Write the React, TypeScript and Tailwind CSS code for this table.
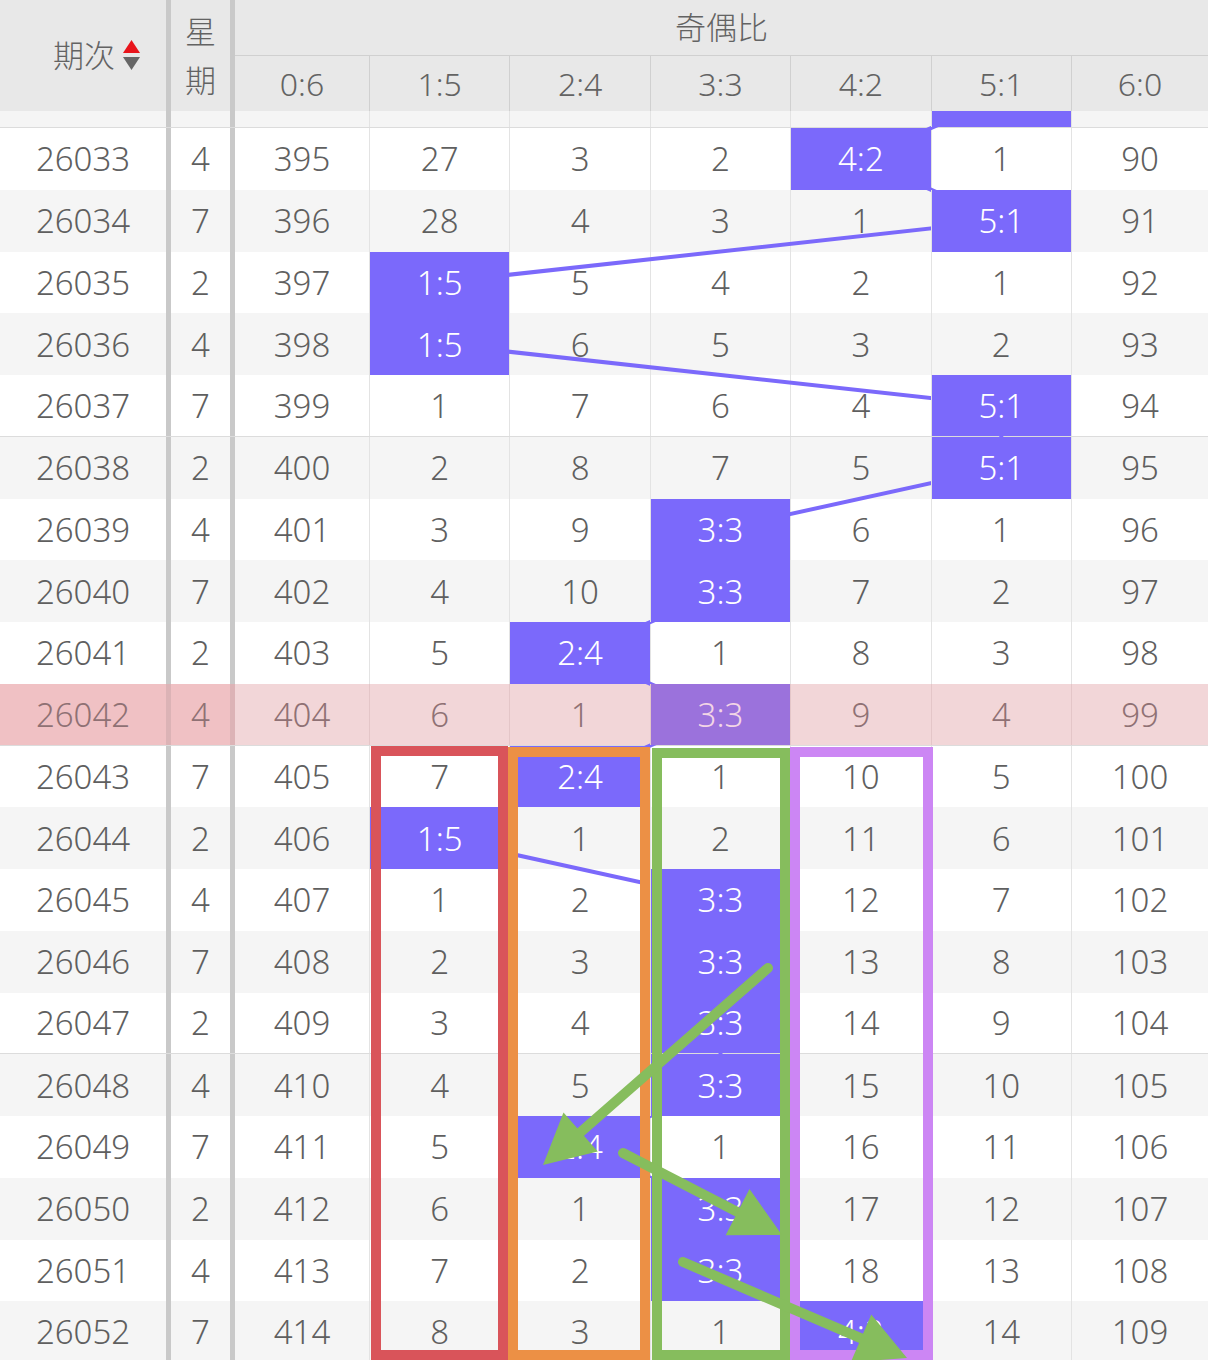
import clsx from 'clsx';

const FONT = '"Noto Sans", "Noto Sans CJK SC", sans-serif';
const LABELS = ['0:6', '1:5', '2:4', '3:3', '4:2', '5:1', '6:0'];
const COL_X = [235, 369, 509.4, 649.8, 790.2, 930.6, 1071, 1208];
const ROW_H = 61.75;
const STRIP_H = 17;
const PINK = 9;
const COLS = 'grid grid-cols-[171px_64px_134px_repeat(5,140.4px)_1fr]';

// [期次, 星期, values for 0:6..6:0, hit column]
const rows: [string, number, number[], number][] = [
    ['26033', 4, [395, 27, 3, 2, 0, 1, 90], 4],
    ['26034', 7, [396, 28, 4, 3, 1, 0, 91], 5],
    ['26035', 2, [397, 0, 5, 4, 2, 1, 92], 1],
    ['26036', 4, [398, 0, 6, 5, 3, 2, 93], 1],
    ['26037', 7, [399, 1, 7, 6, 4, 0, 94], 5],
    ['26038', 2, [400, 2, 8, 7, 5, 0, 95], 5],
    ['26039', 4, [401, 3, 9, 0, 6, 1, 96], 3],
    ['26040', 7, [402, 4, 10, 0, 7, 2, 97], 3],
    ['26041', 2, [403, 5, 0, 1, 8, 3, 98], 2],
    ['26042', 4, [404, 6, 1, 0, 9, 4, 99], 3],
    ['26043', 7, [405, 7, 0, 1, 10, 5, 100], 2],
    ['26044', 2, [406, 0, 1, 2, 11, 6, 101], 1],
    ['26045', 4, [407, 1, 2, 0, 12, 7, 102], 3],
    ['26046', 7, [408, 2, 3, 0, 13, 8, 103], 3],
    ['26047', 2, [409, 3, 4, 0, 14, 9, 104], 3],
    ['26048', 4, [410, 4, 5, 0, 15, 10, 105], 3],
    ['26049', 7, [411, 5, 0, 1, 16, 11, 106], 2],
    ['26050', 2, [412, 6, 1, 0, 17, 12, 107], 3],
    ['26051', 4, [413, 7, 2, 0, 18, 13, 108], 3],
    ['26052', 7, [414, 8, 3, 1, 0, 14, 109], 4],
];

const colCenter = (c: number) => (COL_X[c] + COL_X[c + 1]) / 2 + (c > 0 ? 0.5 : 0);
const rowCenter = (i: number) => STRIP_H + ROW_H * i + ROW_H / 2;

function SortIcon() {
    return (
        <svg width="17" height="31" viewBox="0 0 17 31">
            <polygon points="8.5,0 17,13 0,13" fill="#e8141b" />
            <polygon points="0,17 17,17 8.5,30" fill="#666" />
        </svg>
    );
}

function Header() {
    return (
        <div className={clsx(COLS, 'grid-rows-[56px_55px] bg-[#e8e8e8] text-[#636363]')}>
            <div className="row-span-2 flex items-center justify-end gap-[8px] border-r-[5px] border-[#c9c9c9] pr-[26px] text-[31px] font-light">
                <span>期次</span>
                <SortIcon />
            </div>
            <div className="row-span-2 flex flex-col items-center justify-center border-r-[5px] border-[#c9c9c9] text-[31px] font-light leading-[49px]">
                <span>星</span>
                <span>期</span>
            </div>
            <div className="col-span-7 flex items-center justify-center border-b border-[#d0d0d0] text-[31px] font-light">
                奇偶比
            </div>
            {LABELS.map((l, i) => (
                <div
                    key={l}
                    className={clsx('flex items-center justify-center text-[32px] font-[350]', i > 0 && 'border-l border-[#d0d0d0]')}
                >
                    {l}
                </div>
            ))}
        </div>
    );
}

function DataRow({ row, i }: { row: (typeof rows)[number]; i: number }) {
    const [no, wk, vals, hit] = row;
    const pink = i === PINK;
    return (
        <div
            className={clsx(
                COLS,
                'h-[61.75px] text-[33px] font-[350] leading-none',
                pink ? 'bg-[#f2d6d8] text-[#8f7174]' : i % 2 ? 'bg-[#f5f5f5] text-[#5f5f5f]' : 'bg-white text-[#5f5f5f]',
                (i + 1) % 5 === 0 && 'border-b border-[#dcdcdc]'
            )}
        >
            <div
                className={clsx(
                    'flex items-center justify-center border-r-[5px]',
                    pink ? 'border-[#dcb3b6] bg-[#f0c1c4]' : 'border-[#c9c9c9]'
                )}
            >
                {no}
            </div>
            <div
                className={clsx(
                    'flex items-center justify-center border-r-[5px]',
                    pink ? 'border-[#dcb3b6] bg-[#f0c1c4]' : 'border-[#c9c9c9]'
                )}
            >
                {wk}
            </div>
            {vals.map((v, c) => (
                <div
                    key={c}
                    className={clsx(
                        'flex items-center justify-center',
                        c > 0 && (pink ? 'border-l border-[#e4c6c8]' : 'border-l border-[#e3e3e3]'),
                        c === hit &&
                            (pink ? 'relative z-20 bg-[#9b72dc] text-[#f3d6e6]' : 'relative z-20 bg-[#7b69fb] text-white')
                    )}
                >
                    {c === hit ? LABELS[c] : v}
                </div>
            ))}
        </div>
    );
}

function Body() {
    const hits = [5, ...rows.map(r => r[3])];
    const points = hits.map((c, k) => `${colCenter(c)},${rowCenter(k - 1)}`).join(' ');
    return (
        <div className="relative">
            <svg className="pointer-events-none absolute left-0 top-0 z-10" width="1208" height="1252">
                <polyline points={points} fill="none" stroke="#7b69fb" strokeWidth="4" />
            </svg>
            <div className={clsx(COLS, 'h-[17px] border-b border-[#dcdcdc] bg-[#f5f5f5]')}>
                <div className="border-r-[5px] border-[#c9c9c9]" />
                <div className="border-r-[5px] border-[#c9c9c9]" />
                {LABELS.map((l, c) => (
                    <div
                        key={l}
                        className={clsx(c > 0 && 'border-l border-[#e3e3e3]', c === 5 && 'relative z-20 bg-[#7b69fb]')}
                    />
                ))}
            </div>
            {rows.map((r, i) => (
                <DataRow key={r[0]} row={r} i={i} />
            ))}
        </div>
    );
}

function Arrow({ x1, y1, x2, y2 }: { x1: number; y1: number; x2: number; y2: number }) {
    const len = Math.hypot(x2 - x1, y2 - y1);
    const ux = (x2 - x1) / len;
    const uy = (y2 - y1) / len;
    const bx = x2 - ux * 50;
    const by = y2 - uy * 50;
    const w = 26;
    return (
        <g>
            <line x1={x1} y1={y1} x2={bx + ux * 4} y2={by + uy * 4} stroke="#86bd5d" strokeWidth="10" strokeLinecap="round" />
            <polygon
                points={`${x2},${y2} ${bx - uy * w},${by + ux * w} ${bx + uy * w},${by - ux * w}`}
                fill="#86bd5d"
            />
        </g>
    );
}

function Marks() {
    return (
        <svg className="pointer-events-none absolute left-0 top-0 z-30" width="1208" height="1360">
            <rect x="376" y="751" width="127" height="604" fill="none" stroke="#d9545a" strokeWidth="10" />
            <rect x="513" y="752" width="132" height="603" fill="none" stroke="#ec9045" strokeWidth="10" />
            <rect x="657" y="753" width="128" height="602" fill="none" stroke="#86bd5d" strokeWidth="10" />
            <rect x="795" y="752" width="133" height="603" fill="none" stroke="#cc86f4" strokeWidth="10" />
            <Arrow x1={768} y1={968} x2={543} y2={1165} />
            <Arrow x1={623} y1={1153} x2={782} y2={1235} />
            <Arrow x1={683} y1={1262} x2={907} y2={1358} />
        </svg>
    );
}

export default function App() {
    return (
        <div className="relative h-[1360px] w-[1208px] overflow-hidden bg-white" style={{ fontFamily: FONT }}>
            <Header />
            <Body />
            <Marks />
        </div>
    );
}
